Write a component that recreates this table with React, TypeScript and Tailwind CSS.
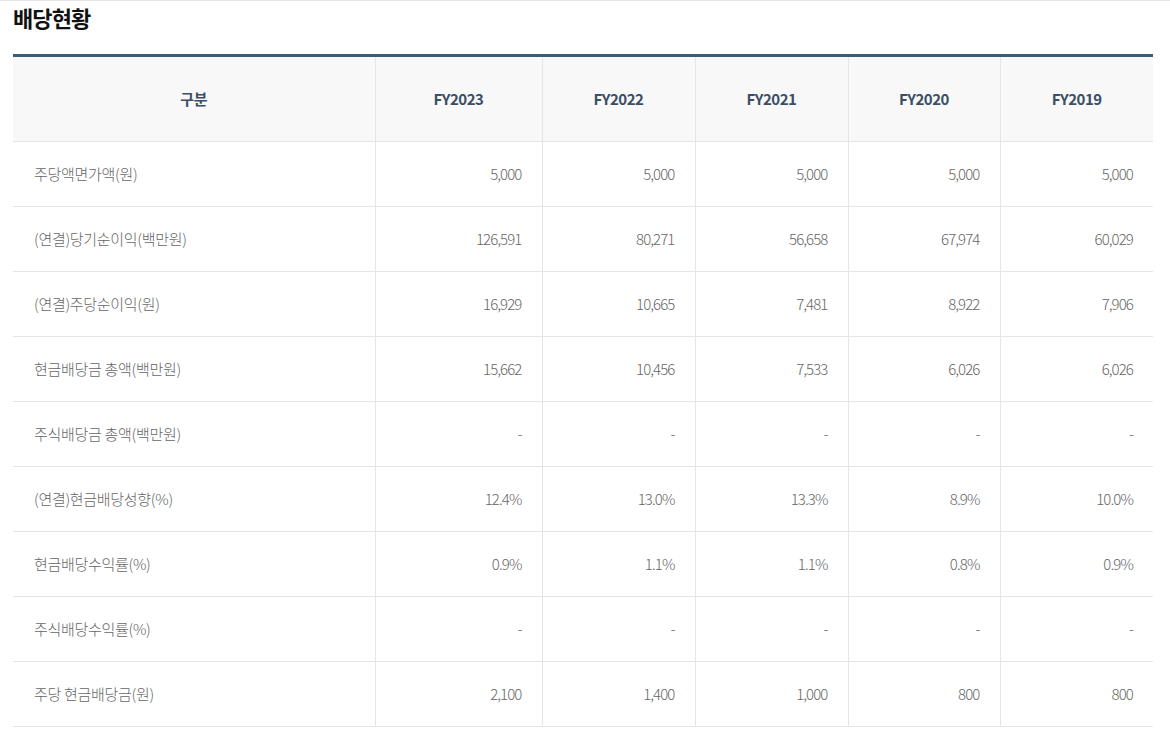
import React from "react";

const years = ["FY2023", "FY2022", "FY2021", "FY2020", "FY2019"];

const rows: [string, string[]][] = [
  ["주당액면가액(원)", ["5,000", "5,000", "5,000", "5,000", "5,000"]],
  ["(연결)당기순이익(백만원)", ["126,591", "80,271", "56,658", "67,974", "60,029"]],
  ["(연결)주당순이익(원)", ["16,929", "10,665", "7,481", "8,922", "7,906"]],
  ["현금배당금 총액(백만원)", ["15,662", "10,456", "7,533", "6,026", "6,026"]],
  ["주식배당금 총액(백만원)", ["-", "-", "-", "-", "-"]],
  ["(연결)현금배당성향(%)", ["12.4%", "13.0%", "13.3%", "8.9%", "10.0%"]],
  ["현금배당수익률(%)", ["0.9%", "1.1%", "1.1%", "0.8%", "0.9%"]],
  ["주식배당수익률(%)", ["-", "-", "-", "-", "-"]],
  ["주당 현금배당금(원)", ["2,100", "1,400", "1,000", "800", "800"]],
];

export default function App() {
  return (
    <div
      className="w-[1170px] h-[733px] bg-white border-t border-[#e6e6e6]"
      style={{ fontFamily: '"Noto Sans CJK KR", "Noto Sans", sans-serif' }}
    >
      <div className="px-[13px] w-[1166px]">
        <h1 className="h-[53px] leading-[32px] text-[22px] font-bold text-[#111] tracking-[-0.04em]">
          배당현황
        </h1>
        <table className="w-[1140px] table-fixed border-collapse border-t-[3px] border-[#3d5a79]">
          <colgroup>
            <col className="w-[362px]" />
            <col className="w-[167px]" />
            <col className="w-[153px]" />
            <col className="w-[153px]" />
            <col className="w-[152px]" />
            <col className="w-[153px]" />
          </colgroup>
          <thead>
            <tr className="h-[86px] bg-[#f8f8f8]">
              <th className="border-b border-[#e5e5e5] text-[15px] font-bold text-[#3a4e66] text-center tracking-[-0.02em]">
                구분
              </th>
              {years.map((y) => (
                <th
                  key={y}
                  className="border-b border-l border-[#e5e5e5] text-[15px] font-bold text-[#3a4e66] text-center tracking-[-0.03em]"
                >
                  {y}
                </th>
              ))}
            </tr>
          </thead>
          <tbody>
            {rows.map(([label, vals]) => (
              <tr key={label} className="h-[65px]">
                <td className="border-b border-[#e5e5e5] pl-[21px] text-[15px] font-light text-[#666] tracking-[-0.02em]">
                  {label}
                </td>
                {vals.map((v, i) => (
                  <td
                    key={i}
                    className="border-b border-l border-[#e5e5e5] pr-[20px] text-right text-[15px] font-light text-[#666] tracking-[-0.06em]"
                  >
                    {v}
                  </td>
                ))}
              </tr>
            ))}
          </tbody>
        </table>
      </div>
    </div>
  );
}
